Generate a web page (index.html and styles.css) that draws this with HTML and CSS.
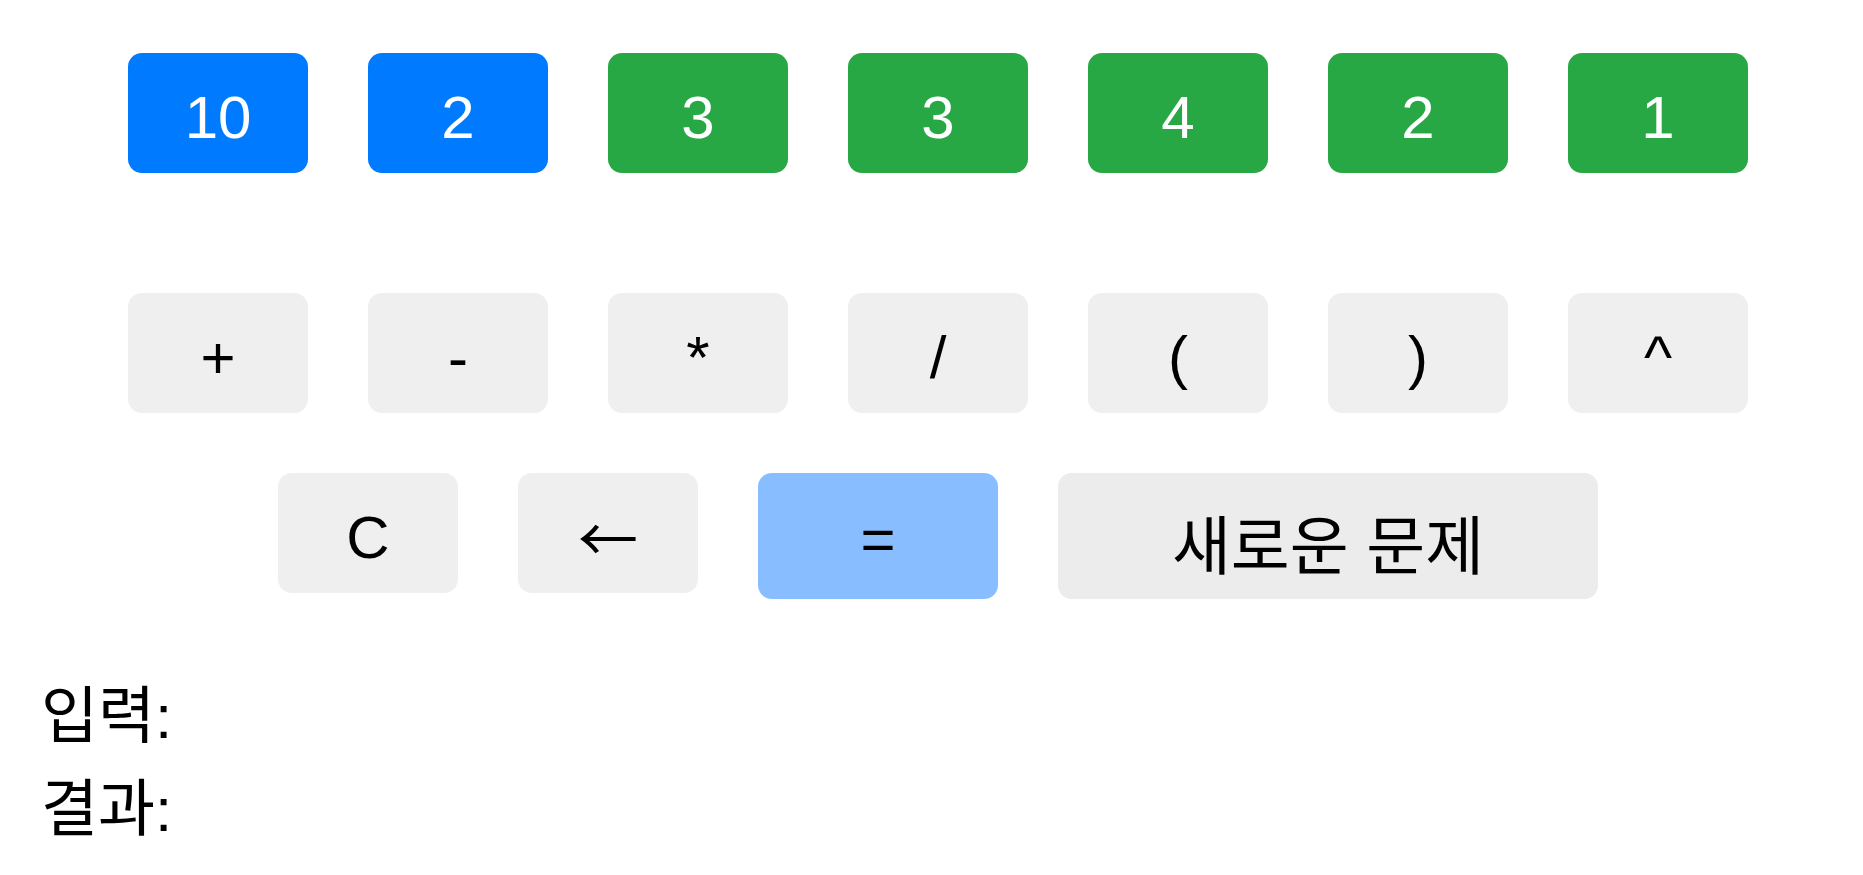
FILE: index.html
```html
<!DOCTYPE html>
<html lang="ko">
<head>
<meta charset="utf-8">
<title>숫자 계산 게임</title>
<link rel="stylesheet" href="styles.css">
</head>
<body>
<div class="app">
  <div class="row numbers">
    <button class="key key-blue">10</button>
    <button class="key key-blue">2</button>
    <button class="key key-green">3</button>
    <button class="key key-green">3</button>
    <button class="key key-green">4</button>
    <button class="key key-green">2</button>
    <button class="key key-green">1</button>
  </div>
  <div class="row operators">
    <button class="key key-gray">+</button>
    <button class="key key-gray">-</button>
    <button class="key key-gray">*</button>
    <button class="key key-gray">/</button>
    <button class="key key-gray">(</button>
    <button class="key key-gray">)</button>
    <button class="key key-gray">^</button>
  </div>
  <div class="row controls">
    <button class="key key-gray">C</button>
    <button class="key key-gray key-arrow">←</button>
    <button class="key key-equals">=</button>
    <button class="key key-new">새로운 문제</button>
  </div>
  <div class="output">
    <div class="line">입력:</div>
    <div class="line">결과:</div>
  </div>
</div>
</body>
</html>
```
FILE: styles.css
```css
html, body {
  margin: 0;
  padding: 0;
  background: #ffffff;
}

.app {
  padding-top: 53px;
  font-family: "Liberation Sans", "Noto Sans CJK KR", sans-serif;
}

.row {
  display: flex;
  justify-content: center;
  align-items: flex-start;
  gap: 60px;
  padding-left: 13px;
}

.numbers {
  margin-bottom: 120px;
}

.operators {
  margin-bottom: 60px;
}

.key {
  box-sizing: border-box;
  width: 180px;
  height: 120px;
  border: none;
  border-radius: 14px;
  padding: 8px 0 0 0;
  margin: 0;
  display: flex;
  align-items: center;
  justify-content: center;
  font-family: "Liberation Sans", "Noto Sans CJK KR", sans-serif;
  font-size: 60px;
  line-height: 69px;
  color: #000000;
}

.key-blue {
  background: #007bff;
  color: #ffffff;
}

.key-green {
  background: #28a745;
  color: #ffffff;
}

.key-gray {
  background: #efefef;
}

.key-arrow {
  font-family: "Noto Sans CJK KR", sans-serif;
  padding-top: 4px;
}

.key-equals {
  width: 240px;
  height: 126px;
  background: #88beff;
  padding-top: 6px;
}

.key-new {
  width: 540px;
  height: 126px;
  background: #ececec;
  font-size: 64px;
  padding-top: 22px;
}

.output {
  padding: 71px 0 0 41px;
  font-family: "Liberation Sans", "Noto Sans CJK KR", sans-serif;
  font-size: 62px;
  color: #000000;
}

.line {
  line-height: 93px;
}
```
